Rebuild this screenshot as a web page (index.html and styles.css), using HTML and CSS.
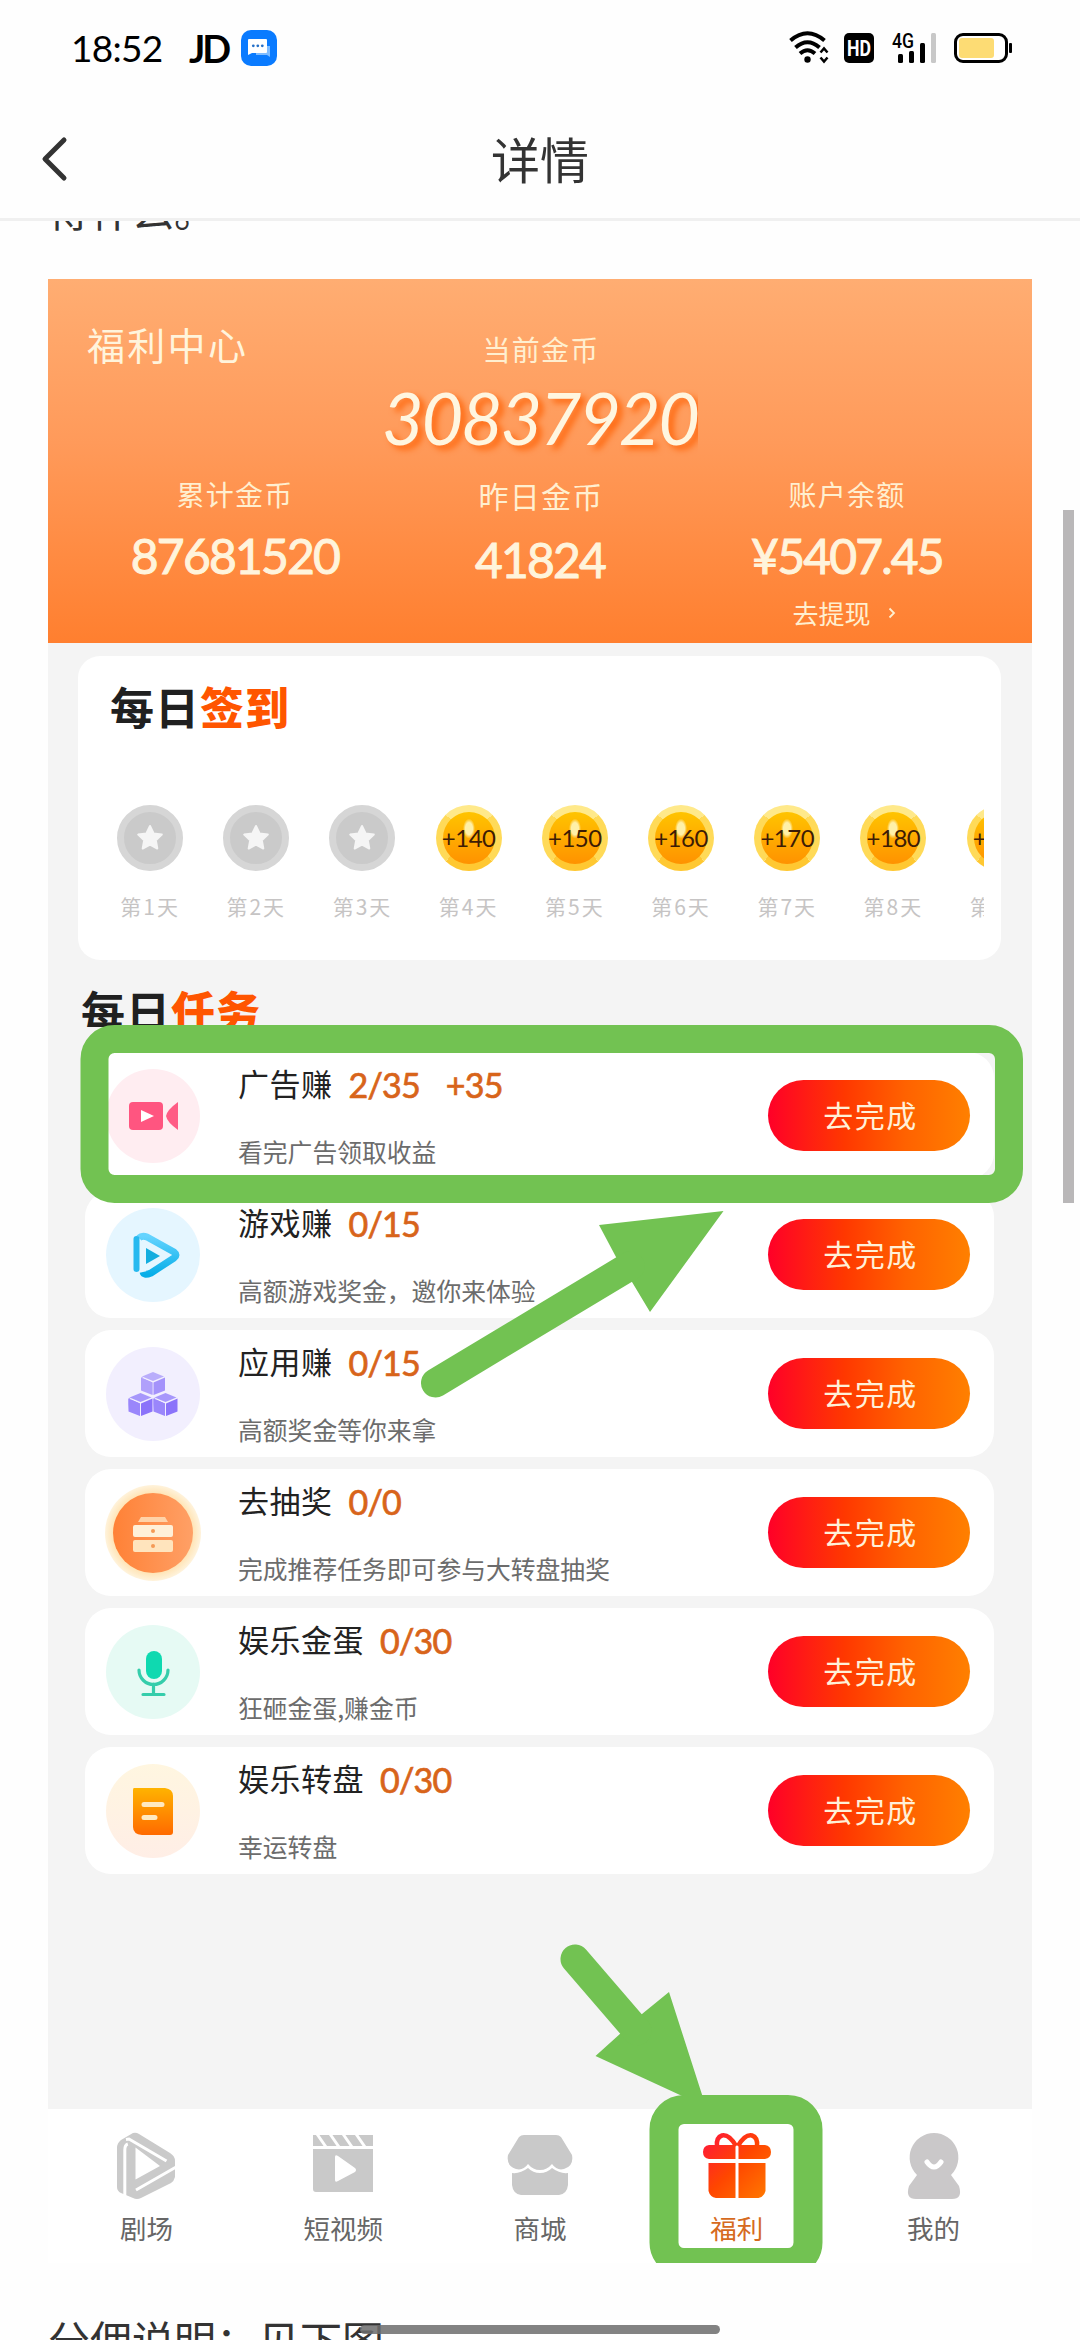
FILE: index.html
```html
<!DOCTYPE html>
<html lang="zh-CN">
<head>
<meta charset="utf-8">
<title>详情</title>
<link rel="stylesheet" href="styles.css">
</head>
<body>
<div class="screen">
  <header class="status">
    <span class="time">18:52</span>
    <span class="jd">JD</span>
    <svg class="chat" width="36" height="36" viewBox="0 0 36 36"><rect width="36" height="36" rx="10" fill="#0a7bff"/><path d="M15 16h14v11l-3-2H15z" fill="#7fbcff"/><path d="M8 9h17a1 1 0 0 1 1 1v12a1 1 0 0 1-1 1H11l-4 2V10a1 1 0 0 1 1-1z" fill="#fff"/><g fill="#2470c8"><circle cx="12.3" cy="15.8" r="1.4"/><circle cx="16.8" cy="15.8" r="1.4"/><circle cx="21.3" cy="15.8" r="1.4"/></g></svg>
    <svg class="sys" width="228" height="34" viewBox="0 0 228 34">
      <g fill="none" stroke="#000" stroke-width="4"><path d="M1.5 9.5Q18.500-5 35.500 9.500"/><path d="M6.500 16.500Q18.500 6 30.500 16.500"/><path d="M11 22.500Q18.500 16 26 22.500"/></g>
      <circle cx="18.500" cy="28.500" r="3.200"/>
      <path d="M31.500 21.500l3.500-4 3.500 4M31.500 26.500l3.500 4 3.500-4" fill="none" stroke="#000" stroke-width="2.500"/>
      <rect x="55" y="2" width="30" height="30" rx="5"/>
      <text class="hd" x="70" y="24.500" text-anchor="middle" textLength="24" lengthAdjust="spacingAndGlyphs">HD</text>
      <text class="net" x="103" y="16.500" textLength="22" lengthAdjust="spacingAndGlyphs">4G</text>
      <rect x="109" y="23" width="5" height="9" rx="1.500"/><rect x="120" y="20" width="5" height="12" rx="1.500"/><rect x="131" y="12" width="5" height="20" rx="1.500"/><rect x="142" y="2" width="5" height="30" rx="1.500" fill="#c8c8c8"/>
      <rect x="166.500" y="3.500" width="51" height="27" rx="7.500" fill="#fff" stroke="#000" stroke-width="3"/>
      <rect x="170" y="7" width="35" height="20" rx="3" fill="#fddc74"/>
      <rect x="220" y="12" width="3" height="10" rx="1"/>
    </svg>
  </header>

  <nav class="titlebar">
    <svg class="back" width="30" height="48" viewBox="0 0 30 48"><path d="M24 5L5 24l19 19" fill="none" stroke="#333" stroke-width="5" stroke-linecap="round" stroke-linejoin="round"/></svg>
    <h1>详情</h1>
  </nav>

  <main class="article">
    <div class="cut-line"><p>得什么。</p></div>

    <section class="shot">
      <div class="banner">
        <div class="center-name">福利中心</div>
        <div class="current"><div class="label">当前金币</div><div class="big">30837920</div></div>
        <div></div>
        <div class="stat"><div class="label">累计金币</div><div class="value">87681520</div></div>
        <div class="stat mid"><div class="label">昨日金币</div><div class="value">41824</div></div>
        <div class="stat"><div class="label">账户余额</div><div class="value">¥5407.45</div>
          <div class="withdraw">去提现<svg width="8" height="12" viewBox="0 0 8 12"><path d="M1.500 1.500L6 6l-4.500 4.500" fill="none" stroke="#fff0d0" stroke-width="1.800"/></svg></div></div>
      </div>

      <div class="signin">
        <h2>每日<b>签到</b></h2>
        <div class="days">
          <div class="day"><div class="coin off"><svg width="30" height="30" viewBox="0 0 30 30"><path class="star" d="M15 3l3.600 7.500 8.200 1.100-6 5.700 1.500 8.200L15 21.500l-7.300 4 1.500-8.200-6-5.700 8.200-1.100z"/></svg></div><span>第1天</span></div>
          <div class="day"><div class="coin off"><svg width="30" height="30" viewBox="0 0 30 30"><path class="star" d="M15 3l3.600 7.500 8.200 1.100-6 5.700 1.500 8.200L15 21.500l-7.300 4 1.500-8.200-6-5.700 8.200-1.100z"/></svg></div><span>第2天</span></div>
          <div class="day"><div class="coin off"><svg width="30" height="30" viewBox="0 0 30 30"><path class="star" d="M15 3l3.600 7.500 8.200 1.100-6 5.700 1.500 8.200L15 21.500l-7.300 4 1.500-8.200-6-5.700 8.200-1.100z"/></svg></div><span>第3天</span></div>
          <div class="day"><div class="coin gold">+140</div><span>第4天</span></div>
          <div class="day"><div class="coin gold">+150</div><span>第5天</span></div>
          <div class="day"><div class="coin gold">+160</div><span>第6天</span></div>
          <div class="day"><div class="coin gold">+170</div><span>第7天</span></div>
          <div class="day"><div class="coin gold">+180</div><span>第8天</span></div>
          <div class="day"><div class="coin gold">+190</div><span>第9天</span></div>
        </div>
      </div>

      <h2 class="tasks-title">每日<b>任务</b></h2>
      <div class="tasks">
        <article class="task">
          <svg class="icon" width="96" height="96" viewBox="0 0 96 96"><circle cx="48" cy="48" r="47" fill="#ffedf1"/><rect x="24" y="34" width="34" height="28" rx="4" fill="#ff5580"/><path d="M61 48q1-6 12-14v28q-11-8-12-14z" fill="#ff5c85"/><path d="M36 42l13 6-13 6z" fill="#fff"/></svg>
          <div class="info"><h3>广告赚<em>2/35</em><em class="plus">+35</em></h3><p>看完广告领取收益</p></div><button>去完成</button>
        </article>
        <article class="task">
          <svg class="icon" width="96" height="96" viewBox="0 0 96 96"><defs><linearGradient id="b" x2="0" y2="1"><stop stop-color="#65d4ff"/><stop offset="1" stop-color="#08aee8"/></linearGradient></defs><circle cx="48" cy="48" r="47" fill="#e5f6ff"/><path d="M34 31q3-3 8-1l27 15q4 3 0 6L46 66q-7 3-8-1" fill="none" stroke="url(#b)" stroke-width="7" stroke-linejoin="round"/><path d="M31.500 32v30" stroke="#27b9ef" stroke-width="6" stroke-linecap="round"/><path d="M41 41l14 8-14 8z" fill="#13addf"/></svg>
          <div class="info"><h3>游戏赚<em>0/15</em></h3><p>高额游戏奖金，邀你来体验</p></div><button>去完成</button>
        </article>
        <article class="task">
          <svg class="icon" width="96" height="96" viewBox="0 0 96 96"><circle cx="48" cy="48" r="47" fill="#f2effe"/><defs><g id="cube"><path d="M0-11l11 4.500L0-2l-11-4.500z" fill="#a797fb"/><path d="M-12-5.500L-.7-.5v12L-11-6.500l-1 13z" fill="#9a86fb"/><path d="M-12-5.500l11.500 5v12.500L-12 7.500z" fill="#9a86fb"/><path d="M12-5.500L.5-.5V12L12 7.500z" fill="#8b73fa"/></g></defs><use href="#cube" x="48" y="37" opacity=".75"/><use href="#cube" x="35.500" y="58"/><use href="#cube" x="60.500" y="58"/></svg>
          <div class="info"><h3>应用赚<em>0/15</em></h3><p>高额奖金等你来拿</p></div><button>去完成</button>
        </article>
        <article class="task">
          <svg class="icon" width="96" height="96" viewBox="0 0 96 96"><defs><linearGradient id="o"><stop stop-color="#ff8136"/><stop offset="1" stop-color="#ffa066"/></linearGradient><radialGradient id="halo"><stop offset=".8" stop-color="#ffe2b0"/><stop offset="1" stop-color="#fff3dc"/></radialGradient></defs><circle cx="48" cy="48" r="48" fill="url(#halo)"/><circle cx="48" cy="48" r="40" fill="url(#o)"/><path d="M36 32h24l3 5H33z" fill="#ffd2a8"/><rect x="28" y="40" width="40" height="12" rx="2" fill="#fff0d8"/><rect x="28" y="55" width="40" height="12" rx="2" fill="#ffe4bd"/><g fill="#f59a55"><circle cx="48" cy="46" r="2"/><circle cx="48" cy="61" r="2"/></g></svg>
          <div class="info"><h3>去抽奖<em>0/0</em></h3><p>完成推荐任务即可参与大转盘抽奖</p></div><button>去完成</button>
        </article>
        <article class="task">
          <svg class="icon" width="96" height="96" viewBox="0 0 96 96"><circle cx="48" cy="48" r="47" fill="#e6faf4"/><rect x="41" y="27" width="16" height="28" rx="8" fill="#0fd9b0"/><path d="M34 46a14.500 14.500 0 0 0 29 0M48.500 60v9M38 70.500h21" fill="none" stroke="#35cdab" stroke-width="3.200" stroke-linecap="round"/></svg>
          <div class="info"><h3>娱乐金蛋<em>0/30</em></h3><p>狂砸金蛋,赚金币</p></div><button>去完成</button>
        </article>
        <article class="task">
          <svg class="icon" width="96" height="96" viewBox="0 0 96 96"><defs><linearGradient id="y" x2="0" y2="1"><stop stop-color="#ffb300"/><stop offset="1" stop-color="#ff6a00"/></linearGradient><linearGradient id="yb" x2="0" y2="1"><stop stop-color="#fff6e0"/><stop offset="1" stop-color="#ffeee6"/></linearGradient></defs><circle cx="48" cy="48" r="47" fill="url(#yb)"/><path d="M29 25h31q8 1 8 8v36q0 3-3 3H37q-9-1-9-8V27q0-2 1-2z" fill="url(#y)"/><path d="M39 41.500h18M39 54.500h11" stroke="#ffe9c0" stroke-width="5" stroke-linecap="round"/></svg>
          <div class="info"><h3>娱乐转盘<em>0/30</em></h3><p>幸运转盘</p></div><button>去完成</button>
        </article>
      </div>

      <div class="tabs">
        <div class="tab"><svg width="70" height="70" viewBox="0 0 70 70"><path d="M22 3q3-1 6 1l31 19q5 3 5 8v16q-1 4-4 6L30 68q-4 2-8 0L10 63q-4-2-4-6V18q0-5 4-8zM24.500 17.500v32L49 36z" fill="#cacaca" fill-rule="evenodd"/><path d="M13.800 66V20q0-5 3-6M15 9.500l3-.5 37.500 22M66 36.500L25 60" fill="none" stroke="#fff" stroke-width="3"/></svg><span>剧场</span></div>
        <div class="tab"><svg width="70" height="70" viewBox="0 0 70 70"><path d="M5 5h60v11H5zM5 19h60v43H8q-3 0-3-3z" fill="#c9c9c9"/><path d="M9 4l9 13M22 4l9 13M35 4l9 13M48 4l9 13" stroke="#fff" stroke-width="3"/><path d="M27 27q0-3 3-1l17 12q2 2 0 4L30 51q-3 2-3-1z" fill="#fff"/></svg><span>短视频</span></div>
        <div class="tab"><svg width="70" height="70" viewBox="0 0 70 70"><path d="M19 5h32q3 0 5 2l11 18q2 11-8 14-7 2-12-5-5 6-12 6t-12-6q-5 7-12 5Q1 36 3 25L14 7q2-2 5-2z" fill="#c9c9c9"/><path d="M7 43q8 1 16-5 5 5 12 5t12-5q8 6 16 5v12q-1 9-9 10H16q-8-1-9-10z" fill="#c9c9c9"/></svg><span>商城</span></div>
        <div class="tab on"><svg width="70" height="70" viewBox="0 0 70 70"><defs><linearGradient id="g" gradientUnits="userSpaceOnUse" x1="5" y1="5" x2="65" y2="65"><stop stop-color="#ff1838"/><stop offset=".5" stop-color="#ff4600"/><stop offset="1" stop-color="#ff7600"/></linearGradient></defs><path d="M34 16Q27 4 20 5.500q-6 2-5 11M36 16Q43 4 50 5.500q6 2 5 11" fill="none" stroke="url(#g)" stroke-width="4.500"/><path d="M7 15h26.500v14H7q-6-1-6-7t6-7zM36.500 15H63q6 1 6 7t-6 7H36.500zM6.500 33h27v35H14q-6-1-7.500-7zM36.500 33h27v28q-1.500 6-7 7h-20z" fill="url(#g)"/></svg><span>福利</span></div>
        <div class="tab"><svg width="70" height="70" viewBox="0 0 70 70"><path d="M35 3a24.500 24.500 0 0 1 17 42l8 11q4 13-7 13H17Q6 69 10 56l8-11A24.500 24.500 0 0 1 35 3z" fill="#cac8c9"/><path d="M28 32q7 10 14 0" fill="none" stroke="#fff" stroke-width="5" stroke-linecap="round"/></svg><span>我的</span></div>
      </div>

      <svg class="marks" width="984" height="1984" viewBox="48 279 984 1984">
        <g fill="#72c252"><path d="M616 1257L599 1225l124.500-14L650 1312l-18-30z"/><path d="M642 2014l27-22 37 115-110.500-51 25.500-23z"/></g>
        <g fill="none" stroke="#72c252">
          <path d="M435.500 1383L630 1266M575 1959l62 72" stroke-width="29" stroke-linecap="round"/>
          <rect x="94.500" y="1039" width="914.500" height="150" rx="20" stroke-width="28"/>
          <rect x="664" y="2109.500" width="144" height="153" rx="20" stroke-width="29"/>
        </g>
      </svg>
    </section>

    <p class="after">分佣说明：见下图</p>
  </main>
  <div class="scrollbar"></div>
  <div class="home"></div>
</div>
</body>
</html>
```
FILE: styles.css
```css
* { box-sizing: border-box; margin: 0; padding: 0; }
body { width: 1080px; height: 2340px; overflow: hidden; background: #fefefe; font-family: "Noto Sans CJK SC", sans-serif; font-weight: 400; color: #333; }
.screen { position: relative; width: 1080px; height: 2340px; overflow: hidden; display: flex; flex-direction: column; }
svg { display: block; flex: none; }

.status { height: 96px; padding: 0 63px 0 71px; display: flex; align-items: center; color: #000; flex: none; }
.time { font: 400 37px/40px Lato, sans-serif; letter-spacing: -.7px; width: 118px; white-space: nowrap; }
.jd { font: 700 38px/40px Lato, sans-serif; letter-spacing: -3px; width: 52px; }
.sys { margin-left: auto; }
.hd { font: 700 22px Roboto, sans-serif; fill: #fff; }
.net { font: 500 20px Roboto, sans-serif; }

.titlebar { height: 125px; flex: none; border-bottom: 3px solid #f0f0f0; display: grid; grid-template-columns: 80px 1fr 80px; align-items: center; }
.back { margin: 4px 0 0 40px; }
.titlebar h1 { text-align: center; font-size: 49px; line-height: 60px; font-weight: 400; padding-top: 2px; }

.article { flex: 1; display: flex; flex-direction: column; padding: 0 48px; min-height: 0; }
.cut-line { height: 58px; flex: none; overflow: hidden; font-size: 42px; line-height: 60px; }
.cut-line p { margin-top: -42px; }
.after { font-size: 42px; line-height: 60px; margin-top: 46px; white-space: nowrap; }

.shot { position: relative; height: 1984px; flex: none; background: #f4f4f4; display: flex; flex-direction: column; overflow: hidden; }
.banner { height: 364px; flex: none; padding: 48px 38px 0; background: linear-gradient(#ffad72, #ff9a5a 45%, #ff7f2f); display: grid; grid-template-columns: repeat(3, 1fr); grid-template-rows: 147px 1fr; color: #fff4dc; text-align: center; }
.center-name { font-size: 38px; line-height: 34px; letter-spacing: 2.300px; text-align: left; white-space: nowrap; padding-left: 1px; }
.label { font-size: 28px; line-height: 40px; letter-spacing: 1.200px; color: #ffefd0; padding-left: 2px; }
.current .label { padding-top: 2px; margin-bottom: -2px; }
.current .big { font: italic 400 72px/80px Lato, sans-serif; letter-spacing: -2.300px; width: 318px; margin: 10px 0 0 -2px; padding-left: 2px; overflow: hidden; color: #fff6e0; text-shadow: 5px 4px 6px #ff650a; text-align: left; }
.stat .value { font: 400 48px/50px Lato, sans-serif; letter-spacing: -1.800px; margin-top: 17px; -webkit-text-stroke: 1px #fff4dc; padding-left: 2px; }
.stat.mid .label { font-size: 30px; padding-top: 1px; }
.stat.mid .value { margin-top: 20px; padding-left: 0; }
.withdraw { display: flex; justify-content: center; align-items: center; gap: 17px; font-size: 26px; line-height: 32px; margin-top: 16px; padding-right: 4px; color: #ffefd0; }

h2 { font-size: 44px; line-height: 56px; font-weight: 700; letter-spacing: 1px; color: #202020; }
h2 b { color: #ff5500; }
.signin { height: 304px; margin: 13px 31px 0 30px; padding: 22px 17px 0 32px; background: #fff; border-radius: 22px; flex: none; }
.days { display: flex; margin: 71px 0 0 -13px; overflow: hidden; }
.day { width: 106.200px; flex: none; display: flex; flex-direction: column; align-items: center; }
.coin { width: 66px; height: 66px; border-radius: 50%; border: 7px solid #ffdc5e; display: flex; align-items: center; justify-content: center; font: 400 24px/1 Lato, sans-serif; letter-spacing: -.5px; color: #3d1c05; white-space: nowrap; }
.coin.gold { border-color: #ffe98a #ffda58 #ffc832; background: radial-gradient(ellipse 6px 10px at 50% 32%, #fff0a8 60%, rgba(255, 240, 168, 0)), linear-gradient(#ffc400, #ff9200); }
.coin.off { background: #cacaca; border-color: #d6d6d6; }
.star { fill: #f5f5f5; stroke: #f5f5f5; stroke-width: 2; stroke-linejoin: round; }
.day span { font-size: 21px; line-height: 30px; letter-spacing: 2px; margin-top: 20px; color: #c6c4c4; font-weight: 400; white-space: nowrap; }

.tasks-title { margin: 22px 0 0 33px; flex: none; }
.tasks { display: flex; flex-direction: column; gap: 12px; margin: 14px 38px 0 37px; flex: none; }
.task { height: 127px; border-radius: 26px; background: #fff; display: flex; align-items: center; padding: 0 24px 0 20px; }
.info { margin-left: 37px; align-self: flex-start; white-space: nowrap; }
.info h3 { font-size: 31px; line-height: 40px; font-weight: 400; color: #222; letter-spacing: .5px; display: flex; margin-top: 11px; }
.info em { font: 400 34px/44px Lato, sans-serif; letter-spacing: -.8px; color: #d8641a; -webkit-text-stroke: .7px #d8641a; margin-left: 16px; }
.info em.plus { margin-left: 26px; }
.info p { font-size: 24.800px; line-height: 32px; color: #6c6c6c; margin-top: 28px; font-weight: 400; }
.task button { margin-left: auto; width: 202px; height: 71px; border: 0; border-radius: 36px; background: linear-gradient(90deg, #ff0028, #ff3800 38%, #ff6200 68%, #ff8000); font: 400 30px/40px "Noto Sans CJK SC", sans-serif; letter-spacing: 1.500px; color: #fff0d8; padding: 0 0 3px 3px; }

.tabs { margin-top: auto; height: 154px; flex: none; background: #fff; display: grid; grid-template-columns: repeat(5, 1fr); }
.tab { display: flex; flex-direction: column; align-items: center; padding-top: 21px; font-size: 26.500px; line-height: 32px; color: #666; }
.tab span { margin-top: 12px; }
.tab.on span { color: #d66a20; }
.marks { position: absolute; left: 0; top: 0; }

.scrollbar { position: absolute; left: 1063px; top: 510px; width: 11px; height: 693px; background: #b9b7b8; }
.home { position: absolute; left: 360px; top: 2325px; width: 360px; height: 9px; border-radius: 5px; background: rgba(110, 110, 110, .86); }
```
